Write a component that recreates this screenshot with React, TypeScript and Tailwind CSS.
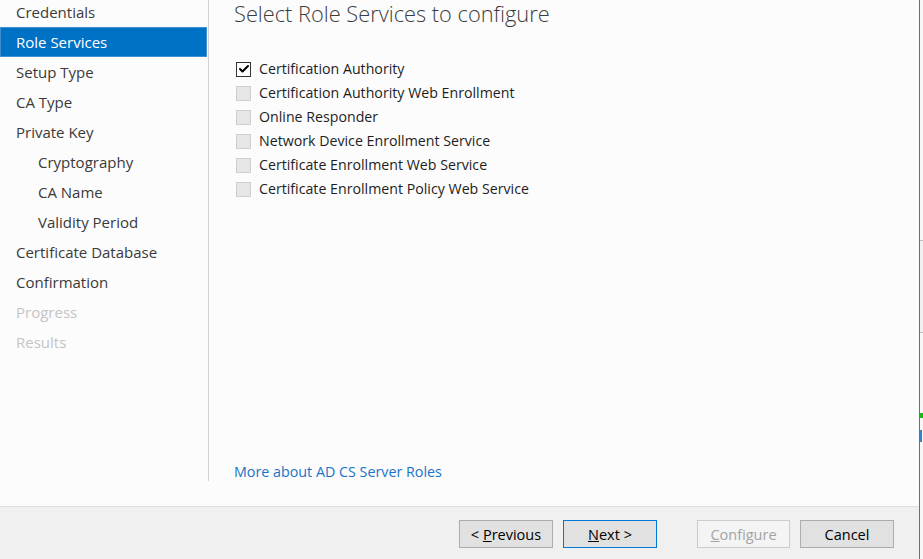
import { Check } from "lucide-react"

const steps = [
  { label: "Credentials", indent: false, state: "normal" },
  { label: "Role Services", indent: false, state: "active" },
  { label: "Setup Type", indent: false, state: "normal" },
  { label: "CA Type", indent: false, state: "normal" },
  { label: "Private Key", indent: false, state: "normal" },
  { label: "Cryptography", indent: true, state: "normal" },
  { label: "CA Name", indent: true, state: "normal" },
  { label: "Validity Period", indent: true, state: "normal" },
  { label: "Certificate Database", indent: false, state: "normal" },
  { label: "Confirmation", indent: false, state: "normal" },
  { label: "Progress", indent: false, state: "disabled" },
  { label: "Results", indent: false, state: "disabled" },
]

const services = [
  { label: "Certification Authority", checked: true },
  { label: "Certification Authority Web Enrollment", checked: false },
  { label: "Online Responder", checked: false },
  { label: "Network Device Enrollment Service", checked: false },
  { label: "Certificate Enrollment Web Service", checked: false },
  { label: "Certificate Enrollment Policy Web Service", checked: false },
]

const font = { fontFamily: '"Segoe UI", "Open Sans", sans-serif' }

export default function App() {
  return (
    <div className="flex h-[559px] w-[923px] overflow-hidden bg-[#fcfcfc] text-[#333]" style={font}>
      {/* wizard window */}
      <div className="flex h-full w-[919px] flex-col">
        <div className="flex h-[506px] bg-[#fcfcfc]">
          {/* step list */}
          <div className="h-[481px] w-[209px] border-r border-[#d4d4d4]">
            <div className="-mt-[3px] flex flex-col">
              {steps.map((s) => (
                <div
                  key={s.label}
                  className={`flex h-[30px] w-[207px] items-center text-[15px] ${
                    s.state === "active" ? "pl-[15px]" : s.indent ? "pl-[38px]" : "pl-[16px]"
                  } ${
                    s.state === "active"
                      ? "border border-[#3d8fd1] bg-[#0072c6] text-white"
                      : s.state === "disabled"
                      ? "text-[#c4c4c4]"
                      : "text-[#3a3a3a]"
                  }`}
                >
                  {s.label}
                </div>
              ))}
            </div>
          </div>

          {/* content */}
          <div className="flex flex-1 flex-col pl-[25px]">
            <h1 className="text-[21.8px] font-light leading-[28px] text-[#3c3c3c]">
              Select Role Services to configure
            </h1>
            <div className="mt-[29px] flex flex-col">
              {services.map((s) => (
                <div key={s.label} className="flex h-[24px] items-center">
                  <div
                    className={`ml-[2px] flex h-[15px] w-[15px] items-center justify-center border ${
                      s.checked ? "border-[#333] bg-white" : "border-[#cfcfcf] bg-[#e6e6e6]"
                    }`}
                  >
                    {s.checked && <Check className="h-[12px] w-[12px] text-black" strokeWidth={4} />}
                  </div>
                  <span className="ml-[8px] text-[14.2px] text-[#1e1e1e]">{s.label}</span>
                </div>
              ))}
            </div>
            <div className="flex-1" />
            <a className="mb-[24px] text-[14.3px] text-[#1a73c8]">More about AD CS Server Roles</a>
          </div>
        </div>

        {/* footer */}
        <div className="flex flex-1 items-start border-t border-[#dfdfdf] bg-[#f0f0f0] pt-[13px]">
          <div className="ml-[459px] flex gap-[10px]">
            <button className="h-[28px] w-[94px] border border-[#adadad] bg-[#e1e1e1] pt-px text-[14.5px] text-black">
              &lt; <span className="underline">P</span>revious
            </button>
            <button className="h-[28px] w-[94px] border border-[#0078d7] bg-[#e1e1e1] pt-px text-[14.5px] text-black">
              <span className="underline">N</span>ext &gt;
            </button>
          </div>
          <div className="ml-[40px] flex gap-[10px]">
            <button className="h-[28px] w-[93px] border border-[#cccccc] bg-[#f4f4f4] pt-px text-[14.5px] text-[#a3a3a3]">
              <span className="underline">C</span>onfigure
            </button>
            <button className="h-[28px] w-[94px] border border-[#adadad] bg-[#e1e1e1] pt-px text-[14.5px] text-black">
              Cancel
            </button>
          </div>
        </div>
      </div>

      {/* window edge and sliver of background window */}
      <div className="h-full w-px bg-[#6e6e6e]" />
      <div className="flex h-full flex-1 flex-col bg-[#f7f7f7]">
        <div className="h-[240px]" />
        <div className="h-[93px] border-y border-[#bdbdbd] bg-[#f0f0f0]" />
        <div className="h-[80px]" />
        <div className="h-[5px] w-[3px] bg-[#10c010]" />
        <div className="mt-[12px] h-[12px] w-[2px] bg-[#3b7fd0]" />
      </div>
    </div>
  )
}
